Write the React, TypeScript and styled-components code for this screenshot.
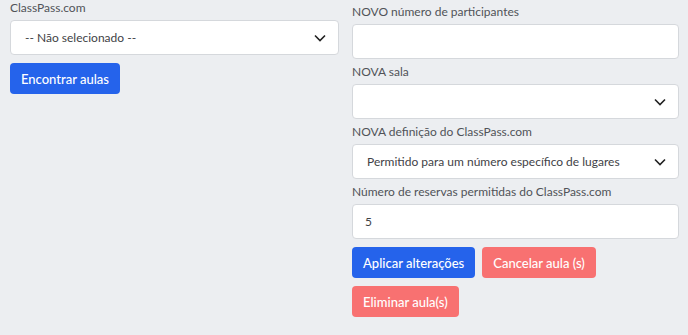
import styled, { createGlobalStyle } from "styled-components";

const GlobalStyle = createGlobalStyle`
  body {
    margin: 0;
    background: #eceef1;
    font-family: Lato, "Noto Sans", sans-serif;
  }
`;

const Page = styled.div`
  display: grid;
  grid-template-columns: 329px 327px;
  column-gap: 13px;
  padding: 0 9px 0 10px;
  width: 688px;
  height: 335px;
  box-sizing: border-box;
`;

const Column = styled.div<{ $top: number }>`
  display: flex;
  flex-direction: column;
  align-items: flex-start;
  padding-top: ${(p) => p.$top}px;
`;

const Field = styled.div<{ $space: number }>`
  display: flex;
  flex-direction: column;
  width: 100%;
  margin-bottom: ${(p) => p.$space}px;
`;

const Label = styled.label`
  font-size: 12px;
  line-height: 16px;
  color: #505358;
  margin-bottom: 4px;
`;

const Box = styled.div<{ $pad?: number }>`
  position: relative;
  display: flex;
  align-items: center;
  height: 35px;
  box-sizing: border-box;
  padding: 0 ${(p) => p.$pad ?? 14}px;
  background: #fff;
  border: 1px solid #d5d8dc;
  border-radius: 4px;
  font-size: 12px;
  color: #3f4246;
`;

const Chevron = styled.svg`
  position: absolute;
  right: 12px;
  top: 50%;
  transform: translateY(-50%);
`;

const Buttons = styled.div`
  display: flex;
  flex-wrap: wrap;
  gap: 8px 7px;
  width: 100%;
  margin-top: 3px;
`;

const Button = styled.button<{ $tone: "blue" | "red" }>`
  height: 31px;
  padding: 0 11px;
  border: none;
  border-radius: 4px;
  background: ${(p) => (p.$tone === "blue" ? "#2563eb" : "#f87171")};
  color: #fff;
  font-family: inherit;
  font-size: 13px;
  font-weight: 500;
  cursor: pointer;
`;

const Arrow = () => (
  <Chevron width="12" height="8" viewBox="0 0 12 8">
    <path d="M1 1.5l5 5 5-5" fill="none" stroke="#222" strokeWidth="1.6" />
  </Chevron>
);

const App = () => {
  return (
    <>
      <GlobalStyle />
      <Page>
        <Column $top={0}>
          <Field $space={8}>
            <Label>ClassPass.com</Label>
            <Box>
              -- Não selecionado --
              <Arrow />
            </Box>
          </Field>
          <Button $tone="blue">Encontrar aulas</Button>
        </Column>
        <Column $top={4}>
          <Field $space={5}>
            <Label>NOVO número de participantes</Label>
            <Box />
          </Field>
          <Field $space={5}>
            <Label>NOVA sala</Label>
            <Box>
              <Arrow />
            </Box>
          </Field>
          <Field $space={5}>
            <Label>NOVA definição do ClassPass.com</Label>
            <Box>
              Permitido para um número específico de lugares
              <Arrow />
            </Box>
          </Field>
          <Field $space={5}>
            <Label>Número de reservas permitidas do ClassPass.com</Label>
            <Box $pad={12}>5</Box>
          </Field>
          <Buttons>
            <Button $tone="blue">Aplicar alterações</Button>
            <Button $tone="red">Cancelar aula (s)</Button>
            <Button $tone="red">Eliminar aula(s)</Button>
          </Buttons>
        </Column>
      </Page>
    </>
  );
};

export default App;
